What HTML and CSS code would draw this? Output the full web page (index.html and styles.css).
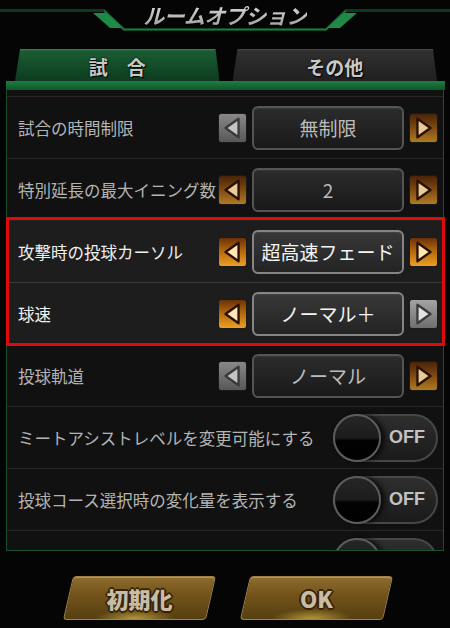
FILE: index.html
```html
<!DOCTYPE html>
<html lang="ja">
  <head>
    <meta charset="UTF-8" />
    <meta name="viewport" content="width=device-width, initial-scale=1.0" />
    <title>ルームオプション</title>
    <link rel="stylesheet" href="styles.css">
  </head>
  <body>
    <header class="title-bar">
      <svg class="title-deco" width="450" height="40" viewBox="0 0 450 40">
        <defs>
          <linearGradient id="fadeL" x1="0" x2="1" y1="0" y2="0">
            <stop offset="0" stop-color="#0c2a16" stop-opacity="0" />
            <stop offset="1" stop-color="#1d7a40" />
          </linearGradient>
          <linearGradient id="fadeR" x1="0" x2="1" y1="0" y2="0">
            <stop offset="0" stop-color="#1d7a40" />
            <stop offset="1" stop-color="#0c2a16" stop-opacity="0" />
          </linearGradient>
        </defs>
        <path d="M0 10.5 H104 L124 29.5 H326 L346 10.5 H450" fill="none" stroke="#0d3a1e" stroke-width="3" />
        <path d="M0 10.5 H104" stroke="url(#fadeL)" stroke-width="1.5" />
        <path d="M346 10.5 H450" stroke="url(#fadeR)" stroke-width="1.5" />
        <path d="M104 10.5 L124 29.5 H326 L346 10.5" fill="none" stroke="#1d7a40" stroke-width="1.5" />
        <polygon points="93,13 106,13 123,28 110,28" fill="#1f8a47" />
        <polygon points="357,13 344,13 327,28 340,28" fill="#1f8a47" />
      </svg>
      <h1 class="title">ルームオプション</h1>
    </header>

    <nav class="tabs">
      <div class="tab tab-active">試　合</div>
      <div class="tab">その他</div>
    </nav>
    <div class="tab-rule"></div>

    <section class="panel">
      <div class="rows">
        <div class="row">
          <span class="label">試合の時間制限</span>
          <div class="picker">
            <button class="arrow arrow-off"><svg viewBox="0 0 29 30"><polygon points="21,5 7,15 21,25" /></svg></button>
            <div class="value">無制限</div>
            <button class="arrow arrow-on"><svg viewBox="0 0 29 30"><polygon points="8,5 22,15 8,25" /></svg></button>
          </div>
        </div>

        <div class="row">
          <span class="label">特別延長の最大イニング数</span>
          <div class="picker">
            <button class="arrow arrow-on"><svg viewBox="0 0 29 30"><polygon points="21,5 7,15 21,25" /></svg></button>
            <div class="value">2</div>
            <button class="arrow arrow-on"><svg viewBox="0 0 29 30"><polygon points="8,5 22,15 8,25" /></svg></button>
          </div>
        </div>

        <div class="hot-group">
          <div class="row row-hot">
            <span class="label">攻撃時の投球カーソル</span>
            <div class="picker">
              <button class="arrow arrow-on"><svg viewBox="0 0 29 30"><polygon points="21,5 7,15 21,25" /></svg></button>
              <div class="value">超高速フェード</div>
              <button class="arrow arrow-on"><svg viewBox="0 0 29 30"><polygon points="8,5 22,15 8,25" /></svg></button>
            </div>
          </div>

          <div class="row row-hot">
            <span class="label">球速</span>
            <div class="picker">
              <button class="arrow arrow-on"><svg viewBox="0 0 29 30"><polygon points="21,5 7,15 21,25" /></svg></button>
              <div class="value">ノーマル＋</div>
              <button class="arrow arrow-off"><svg viewBox="0 0 29 30"><polygon points="8,5 22,15 8,25" /></svg></button>
            </div>
          </div>
        </div>

        <div class="row">
          <span class="label">投球軌道</span>
          <div class="picker">
            <button class="arrow arrow-off"><svg viewBox="0 0 29 30"><polygon points="21,5 7,15 21,25" /></svg></button>
            <div class="value">ノーマル</div>
            <button class="arrow arrow-on"><svg viewBox="0 0 29 30"><polygon points="8,5 22,15 8,25" /></svg></button>
          </div>
        </div>

        <div class="row">
          <span class="label">ミートアシストレベルを変更可能にする</span>
          <div class="toggle"><span class="knob"></span><span class="toggle-text">OFF</span></div>
        </div>

        <div class="row">
          <span class="label">投球コース選択時の変化量を表示する</span>
          <div class="toggle"><span class="knob"></span><span class="toggle-text">OFF</span></div>
        </div>

        <div class="row">
          <span class="label"></span>
          <div class="toggle"><span class="knob"></span><span class="toggle-text">OFF</span></div>
        </div>
      </div>
    </section>

    <footer class="actions">
      <button class="gold-btn"><span>初期化</span></button>
      <button class="gold-btn"><span>OK</span></button>
    </footer>
  </body>
</html>
```

FILE: styles.css
```css
* {
  box-sizing: border-box;
}

body {
  margin: 0;
  width: 450px;
  height: 628px;
  overflow: hidden;
  background: #050505;
  color: #b4b4b4;
  font-family: "Noto Sans CJK JP", "Noto Sans", sans-serif;
}

/* タイトル */
.title-bar {
  position: relative;
  height: 49px;
  display: flex;
  justify-content: center;
}

.title-deco {
  position: absolute;
  left: 0;
  top: 0;
}

.title {
  position: relative;
  margin: 0;
  font-size: 21px;
  line-height: 30px;
  font-weight: bold;
  font-style: italic;
  letter-spacing: -0.5px;
  background: linear-gradient(#e4e4e4, #9a9a9a 60%, #7c7c7c);
  -webkit-background-clip: text;
  background-clip: text;
  color: transparent;
  filter: drop-shadow(1px 1px 0 #000) drop-shadow(-1px 0 0 #000);
}

/* タブ */
.tabs {
  display: flex;
  gap: 13px;
  height: 32px;
  padding: 0 13px 0 15px;
}

.tab {
  flex: 1;
  display: flex;
  align-items: center;
  justify-content: center;
  padding-top: 2px;
  font-size: 19px;
  font-weight: bold;
  color: #c8c8c8;
  text-shadow: 0 0 2px #000, 1px 1px 1px #000;
  background: linear-gradient(#4a4a4a 0, #303030 2px, #202020 100%);
  clip-path: polygon(5px 0, calc(100% - 4px) 0, 100% 100%, 0 100%);
}

.tab-active {
  background: linear-gradient(#2f8a52 0, #1a5c33 2px, #0d3c1e 100%);
}

.tab-rule {
  height: 9px;
  margin: 0 5px 0 6px;
  background: linear-gradient(#1f7e44, #0f5529);
}

/* 設定パネル */
.panel {
  margin: 0 6px;
  height: 461px;
  padding-top: 6px;
  border: 1px solid #1b4f2d;
  border-top: none;
  background: #111;
}

.rows {
  height: 454px;
  border-top: 1px solid #2c2424;
  clip-path: inset(0 -4px 0 -4px);
}

.row {
  height: 62px;
  display: flex;
  align-items: center;
  justify-content: space-between;
  padding: 0 5px 0 11px;
  border-bottom: 1px solid #272727;
}

.label {
  font-size: 16.5px;
  white-space: nowrap;
  color: #b4b4b4;
}

.hot-group {
  position: relative;
}

.hot-group::after {
  content: "";
  position: absolute;
  top: -4px;
  bottom: -1px;
  left: -1px;
  right: -2px;
  border: 3px solid #e10a0a;
  pointer-events: none;
}

.row-hot {
  background: #1d1d1d;
  border-bottom-color: #3a3a3a;
}

.row-hot .label {
  color: #f0f0f0;
}

.picker {
  display: flex;
  align-items: center;
  gap: 5px;
}

.value {
  width: 152px;
  height: 44px;
  display: flex;
  align-items: center;
  justify-content: center;
  font-size: 19px;
  color: #bcbcbc;
  border: 2px solid #545454;
  border-radius: 6px;
  background: linear-gradient(#2c2c2c, #191919);
  box-shadow: inset 0 1px 0 rgba(255, 255, 255, 0.06);
}

.row-hot .value {
  color: #f4f4f4;
  border-color: #858585;
  background: linear-gradient(#383838, #242424);
}

.arrow {
  width: 29px;
  height: 30px;
  padding: 0;
  border: 1px solid #1a1a1a;
  border-radius: 3px;
}

.arrow svg {
  display: block;
  width: 27px;
  height: 28px;
}

.arrow polygon {
  stroke-width: 2.5;
  stroke-linejoin: round;
}

.arrow-on {
  background: linear-gradient(#4a2408, #7a4612 45%, #b07a22);
}

.arrow-on polygon {
  fill: #e8cc96;
  stroke: #2a1003;
}

.row-hot .arrow-on {
  background: linear-gradient(#6a3208, #b0660e 45%, #eca024);
}

.row-hot .arrow-on polygon {
  fill: #ffe8b4;
}

.arrow-off {
  background: linear-gradient(#888, #585858);
}

.arrow-off polygon {
  fill: #c4c4c4;
  stroke: #3a3a3a;
}

.row-hot .arrow-off {
  background: linear-gradient(#a4a4a4, #6e6e6e);
}

.row-hot .arrow-off polygon {
  fill: #e2e2e2;
}

/* トグル */
.toggle {
  width: 105px;
  height: 48px;
  display: flex;
  align-items: center;
  border: 2px solid #474747;
  border-radius: 24px;
  background: linear-gradient(#2e2e2e, #1a1a1a);
}

.knob {
  flex: none;
  width: 48px;
  height: 48px;
  margin-left: -2px;
  border: 2px solid #5c5c5c;
  border-radius: 50%;
  background: linear-gradient(#262626 0, #1c1c1c 50%, #030303 55%, #000 100%);
  box-shadow: 4px 0 5px rgba(0, 0, 0, 0.7);
}

.toggle-text {
  margin-left: 8px;
  font-family: "Liberation Sans", Arial, sans-serif;
  font-size: 18px;
  font-weight: bold;
  color: #c2c2c2;
}

/* 下部ボタン */
.actions {
  display: flex;
  justify-content: center;
  gap: 34px;
  padding: 25px 0 0 5px;
}

.gold-btn {
  width: 143px;
  height: 44px;
  padding: 0;
  border: 1px solid #a0844a;
  border-radius: 4px;
  transform: skewX(-13deg);
  background:
    radial-gradient(ellipse 40px 10px at 50% 100%, rgba(220, 190, 80, 0.7), rgba(220, 190, 80, 0) 100%),
    linear-gradient(#8e6c2e, #72521a 45%, #564010);
  box-shadow: inset 0 1px 0 rgba(255, 230, 160, 0.35);
}

.gold-btn span {
  display: block;
  transform: skewX(13deg);
  font-family: "Noto Sans CJK JP", "Noto Sans", sans-serif;
  font-size: 22px;
  font-weight: 900;
  color: #c8bca6;
  text-shadow:
    2px 0 0 #3a2408, -2px 0 0 #3a2408, 0 2px 0 #3a2408, 0 -2px 0 #3a2408,
    1px 1px 0 #3a2408, -1px -1px 0 #3a2408, 1px -1px 0 #3a2408, -1px 1px 0 #3a2408;
}
```
